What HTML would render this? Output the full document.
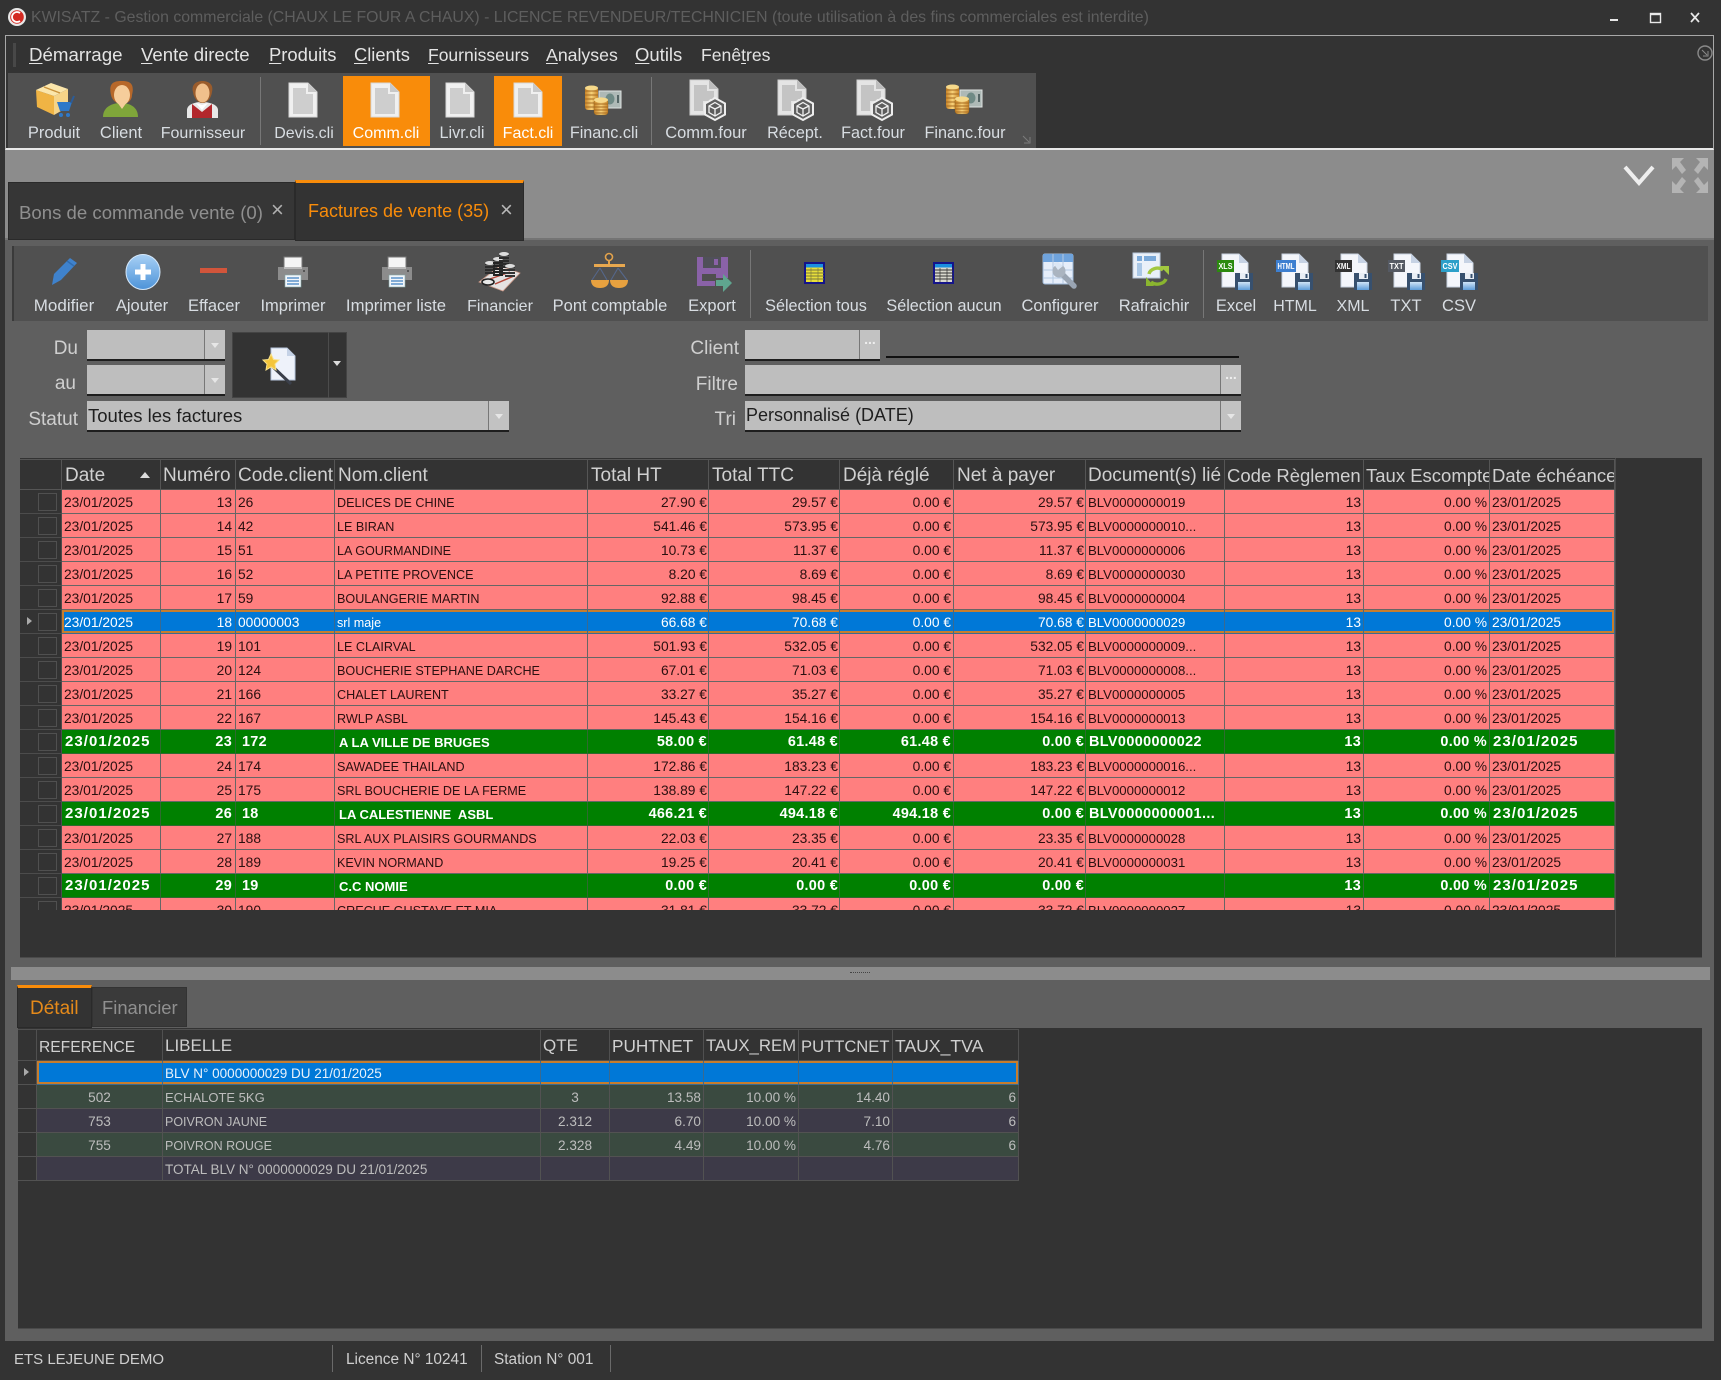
<!DOCTYPE html>
<html lang="fr"><head><meta charset="utf-8"><title>KWISATZ</title>
<style>
html,body{margin:0;padding:0;background:#333}
#app{position:relative;width:1721px;height:1380px;overflow:hidden;background:#333;font-family:"Liberation Sans",Arial,sans-serif;filter:blur(.3px)}
.b{position:absolute}
.t{position:absolute;white-space:nowrap;line-height:22px;height:22px}
.c{transform:translateX(-50%)}
.tb{font-size:16.5px;color:#d8dde2}
.m{font-size:18.5px;color:#e4e4e4;top:44px}
.m u{text-underline-offset:2px}
.lb{font-size:19px;color:#cfcfcf;text-align:right}
.inp{position:absolute;background:#bebebe;border-bottom:2px solid #1e1e1e;box-sizing:border-box}
.inp s{position:absolute;right:0;top:0;bottom:0;border-left:1px solid #777;background:#c2c2c2;text-decoration:none}
.inp s.ar:after{content:"";position:absolute;left:50%;top:45%;margin-left:-4px;border:4px solid transparent;border-top:5px solid #e6e6e6}
.inp s.dt:after{content:"...";position:absolute;left:0;right:0;top:1px;text-align:center;color:#eee;font-size:14px;font-weight:bold}
.inp span{position:absolute;left:1px;top:4px;font-size:18px;color:#1f1f1f;white-space:nowrap}
table{border-collapse:separate;border-spacing:0;table-layout:fixed;position:absolute;left:0;top:0}
td,th{box-sizing:border-box;overflow:hidden;white-space:nowrap;padding:0 2px;border-right:1px solid #666;border-bottom:1px solid #666}
#g1 th{height:31px;font-weight:normal;font-size:19px;color:#d0d0d0;text-align:left;padding:2px 3px 0;background:#333;border-color:#555;border-top:1px solid #555}
#g1 th:nth-child(n+11){font-size:18.5px}
#g1 td{height:24px;background:#ff7f7f;color:#2b1010;font-size:13.8px;line-height:21px;padding:2px 2px 0;vertical-align:top}
#g1 td:nth-child(1){background:#333;position:relative;border-color:#4c4c4c}
#g1 td:nth-child(3){text-align:right;padding-right:3px}
#g1 td:nth-child(6),#g1 td:nth-child(7),#g1 td:nth-child(9){text-align:right;padding-right:1px}
#g1 td:nth-child(8),#g1 td:nth-child(11),#g1 td:nth-child(12){text-align:right;padding-right:2px}
#g1 td:nth-child(5){font-size:12.6px;padding-top:3px;line-height:20px}
#g1 td:nth-child(10){font-size:13.2px}
#g1 td i{position:absolute;left:18px;top:3px;width:17px;height:16px;border:1px solid #505050}
#g1 tr.g td{background:#008000;color:#fff;font-weight:bold;font-size:14.4px;letter-spacing:.3px;border-color:#2f6a2f}
#g1 tr.g td:nth-child(1){background:#333;border-color:#4c4c4c}
#g1 tr.g td:nth-child(2),#g1 tr.g td:nth-child(13){letter-spacing:1.05px;font-size:15px;padding-top:1px;padding-left:3px;line-height:22px}
#g1 tr.g td:nth-child(4){padding-left:6px}
#g1 tr.g td:nth-child(5){font-size:13px;padding-left:4px;letter-spacing:0;padding-top:2px;line-height:21px}
#g1 tr.g td:nth-child(10){letter-spacing:.4px;padding-left:3px}
#g1 tr.s td{background:#0078d7;color:#fff;box-shadow:inset 0 2px 0 #c67d2e,inset 0 -2px 0 #c67d2e;border-color:#3a6a90}
#g1 tr.s td:nth-child(1){background:#333;box-shadow:none;border-color:#4c4c4c}
#g1 tr.s td:nth-child(2){box-shadow:inset 0 2px 0 #c67d2e,inset 0 -2px 0 #c67d2e,inset 2px 0 0 #c67d2e}
#g1 tr.s td:nth-child(13){box-shadow:inset 0 2px 0 #c67d2e,inset 0 -2px 0 #c67d2e,inset -2px 0 0 #c67d2e}
#g1 tr.s td:nth-child(1):before{content:"";position:absolute;left:7px;top:7px;border:4px solid transparent;border-left:5px solid #aaa}
#g2 th{height:32px;font-weight:normal;font-size:16.6px;color:#d0d0d0;text-align:left;padding:2px 2px 0;background:#333;border-color:#505050;border-top:1px solid #505050}
#g2 td{height:24px;font-size:13px;color:#bdbdbd;line-height:21px;padding:2px 2px 0;vertical-align:top;background:#3d3a48;border-color:#525252}
#g2 tr.a td{background:#3a4a40}
#g2 td:nth-child(1){background:#333 !important;position:relative}
#g2 td:nth-child(2){text-align:center;font-size:13.6px}
#g2 td:nth-child(4){text-align:center;font-size:13.6px}
#g2 td:nth-child(5),#g2 td:nth-child(6),#g2 td:nth-child(7),#g2 td:nth-child(8){text-align:right;font-size:13.6px}
#g2 tr.s td{background:#0078d7;color:#e8f2fb;box-shadow:inset 0 2px 0 #c67d2e,inset 0 -2px 0 #c67d2e;border-color:#3a6a90}
#g2 tr.s td:nth-child(1){box-shadow:none;border-color:#525252}
#g2 tr.s td:nth-child(2){box-shadow:inset 0 2px 0 #c67d2e,inset 0 -2px 0 #c67d2e,inset 2px 0 0 #c67d2e}
#g2 tr.s td:nth-child(8){box-shadow:inset 0 2px 0 #c67d2e,inset 0 -2px 0 #c67d2e,inset -2px 0 0 #c67d2e}
#g2 tr.s td:nth-child(1):before{content:"";position:absolute;left:6px;top:7px;border:4px solid transparent;border-left:5px solid #aaa}
.tab{position:absolute;box-sizing:border-box;background:#333;border:1px solid #2a2a2a}
svg{position:absolute;left:0;top:0}
</style></head>
<body><div id="app">

<!-- main panels -->
<div class="b" style="left:5px;top:35px;width:1709px;height:1306px;background:#5f5f5f"></div>
<div class="b" style="left:5px;top:150px;width:1709px;height:90px;background:#8c8c8c"></div>
<div class="b" style="left:5px;top:238px;width:1709px;height:2px;background:#747474"></div>
<div class="b" style="left:5px;top:35px;width:1709px;height:115px;box-sizing:border-box;background:#333;border:1px solid #a8a8a8;border-bottom:2px solid #e8e8e8"></div>
<div class="b" style="left:8px;top:73px;width:1028px;height:75px;background:#505050"></div>
<div class="b" style="left:343px;top:76px;width:87px;height:70px;background:#f98c0a"></div>
<div class="b" style="left:494px;top:76px;width:68px;height:70px;background:#f98c0a"></div>
<div class="b" style="left:260px;top:77px;width:1px;height:68px;background:#777"></div>
<div class="b" style="left:651px;top:77px;width:1px;height:68px;background:#777"></div>
<div class="b" style="left:13px;top:43px;width:3px;height:24px;background:#484848"></div>

<!-- title -->
<div class="t" style="left:31px;top:7px;font-size:15.85px;color:#5e5e5e">KWISATZ - Gestion commerciale (CHAUX LE FOUR A CHAUX) - LICENCE REVENDEUR/TECHNICIEN (toute utilisation à des fins commerciales est interdite)</div>

<!-- menu -->
<div class="t m" style="left:29px;font-size:18.7px"><u>D</u>émarrage</div>
<div class="t m" style="left:141px;font-size:18.6px"><u>V</u>ente directe</div>
<div class="t m" style="left:269px;font-size:18.4px"><u>P</u>roduits</div>
<div class="t m" style="left:354px;font-size:18.3px"><u>C</u>lients</div>
<div class="t m" style="left:428px;font-size:17.5px"><u>F</u>ournisseurs</div>
<div class="t m" style="left:546px;font-size:17.7px"><u>A</u>nalyses</div>
<div class="t m" style="left:635px;font-size:18.5px"><u>O</u>utils</div>
<div class="t m" style="left:701px;font-size:17.6px">Fenê<u>t</u>res</div>

<!-- toolbar labels -->
<div class="t c tb" style="left:54px;top:122px">Produit</div>
<div class="t c tb" style="left:121px;top:122px">Client</div>
<div class="t c tb" style="left:203px;top:123px;font-size:16px">Fournisseur</div>
<div class="t c tb" style="left:304px;top:123px;font-size:16px">Devis.cli</div>
<div class="t c tb" style="left:386px;top:123px;color:#fff;font-size:16px">Comm.cli</div>
<div class="t c tb" style="left:462px;top:122px;font-size:16.2px">Livr.cli</div>
<div class="t c tb" style="left:528px;top:123px;color:#fff;font-size:16px">Fact.cli</div>
<div class="t c tb" style="left:604px;top:122px;font-size:16.2px">Financ.cli</div>
<div class="t c tb" style="left:706px;top:122px">Comm.four</div>
<div class="t c tb" style="left:795px;top:122px;font-size:16.2px">Récept.</div>
<div class="t c tb" style="left:873px;top:122px;font-size:16.2px">Fact.four</div>
<div class="t c tb" style="left:965px;top:122px;font-size:16.2px">Financ.four</div>

<!-- tabs -->
<div class="tab" style="left:8px;top:182px;width:287px;height:58px;background:#363636"></div>
<div class="t" style="left:19px;top:202px;font-size:18.6px;color:#8f8f8f">Bons de commande vente (0)</div>
<div class="t" style="left:271px;top:199px;font-size:22px;color:#b0b0b0">×</div>
<div class="tab" style="left:295px;top:180px;width:229px;height:61px;border-top:3px solid #f98c0a"></div>
<div class="t" style="left:308px;top:200px;font-size:18px;color:#f98c0a">Factures de vente (35)</div>
<div class="t" style="left:500px;top:199px;font-size:22px;color:#b8b8b8">×</div>

<!-- ribbon -->
<div class="b" style="left:12px;top:246px;width:1696px;height:75px;background:#505050;border-left:2px solid #3a3a3a;box-sizing:border-box"></div>
<div class="b" style="left:750px;top:250px;width:1px;height:68px;background:#777"></div>
<div class="b" style="left:1203px;top:250px;width:1px;height:68px;background:#777"></div>
<div class="t c tb" style="left:64px;top:295px;font-size:17px">Modifier</div>
<div class="t c tb" style="left:142px;top:295px">Ajouter</div>
<div class="t c tb" style="left:214px;top:295px">Effacer</div>
<div class="t c tb" style="left:293px;top:295px">Imprimer</div>
<div class="t c tb" style="left:396px;top:295px;font-size:16.7px">Imprimer liste</div>
<div class="t c tb" style="left:500px;top:296px;font-size:16px">Financier</div>
<div class="t c tb" style="left:610px;top:295px">Pont comptable</div>
<div class="t c tb" style="left:712px;top:295px">Export</div>
<div class="t c tb" style="left:816px;top:295px;font-size:16.2px">Sélection tous</div>
<div class="t c tb" style="left:944px;top:295px;font-size:16.2px">Sélection aucun</div>
<div class="t c tb" style="left:1060px;top:295px">Configurer</div>
<div class="t c tb" style="left:1154px;top:295px">Rafraichir</div>
<div class="t c tb" style="left:1236px;top:295px">Excel</div>
<div class="t c tb" style="left:1295px;top:296px;font-size:16px">HTML</div>
<div class="t c tb" style="left:1353px;top:296px;font-size:16px">XML</div>
<div class="t c tb" style="left:1406px;top:295px">TXT</div>
<div class="t c tb" style="left:1459px;top:295px">CSV</div>

<!-- form -->
<div class="t lb" style="left:0;width:78px;top:338px">Du</div>
<div class="t lb" style="left:0;width:76px;top:373px">au</div>
<div class="t lb" style="left:0;width:78px;top:409px">Statut</div>
<div class="t lb" style="left:640px;width:99px;top:338px">Client</div>
<div class="t lb" style="left:640px;width:98px;top:374px">Filtre</div>
<div class="t lb" style="left:640px;width:96px;top:409px">Tri</div>
<div class="inp" style="left:87px;top:330px;width:138px;height:31px"><s class="ar" style="width:20px"></s></div>
<div class="inp" style="left:87px;top:365px;width:138px;height:31px"><s class="ar" style="width:20px"></s></div>
<div class="inp" style="left:87px;top:401px;width:422px;height:31px"><span style="font-size:18.5px;left:1px">Toutes les factures</span><s class="ar" style="width:20px"></s></div>
<div class="b" style="left:232px;top:332px;width:115px;height:66px;background:#333;border:1px solid #444;box-sizing:border-box"></div>
<div class="b" style="left:328px;top:332px;width:1px;height:66px;background:#4c4c4c"></div>
<div class="b" style="left:333px;top:361px;border:4px solid transparent;border-top:5px solid #ddd"></div>
<div class="inp" style="left:745px;top:330px;width:135px;height:31px"><s class="dt" style="width:20px"></s></div>
<div class="b" style="left:886px;top:356px;width:353px;height:2px;background:#111"></div>
<div class="inp" style="left:745px;top:365px;width:496px;height:31px"><s class="dt" style="width:20px"></s></div>
<div class="inp" style="left:745px;top:401px;width:496px;height:31px"><span>Personnalisé (DATE)</span><s class="ar" style="width:20px"></s></div>

<!-- grid 1 -->
<div class="b" style="left:20px;top:458px;width:1682px;height:499px;background:#333;border-bottom:1px solid #4a4a4a"></div>
<div class="b" style="left:1615px;top:458px;width:1px;height:499px;background:#4c4c4c"></div>
<div class="b" style="left:20px;top:459px;width:1595px;height:451px;overflow:hidden">
<table id="g1" style="width:1595px">
<colgroup><col style="width:42px"><col style="width:99px"><col style="width:75px"><col style="width:99px"><col style="width:253px"><col style="width:121px"><col style="width:131px"><col style="width:114px"><col style="width:132px"><col style="width:139px"><col style="width:139px"><col style="width:126px"><col style="width:125px"></colgroup>
<tr><th></th><th style="position:relative">Date<span style="position:absolute;right:10px;top:12px;border:5px solid transparent;border-top:0;border-bottom:6px solid #ddd"></span></th><th style="padding:2px 2px 0">Numéro</th><th style="padding:2px 2px 0">Code.client</th><th>Nom.client</th><th>Total HT</th><th>Total TTC</th><th>Déjà réglé</th><th>Net à payer</th><th style="padding:2px 2px 0">Document(s) lié</th><th style="padding:2px 2px 0">Code Règlemen</th><th style="padding:2px 2px 0">Taux Escompte</th><th style="padding:2px 2px 0">Date échéance</th></tr>
<tr><td><i></i></td><td>23/01/2025</td><td>13</td><td>26</td><td>DELICES DE CHINE</td><td>27.90 €</td><td>29.57 €</td><td>0.00 €</td><td>29.57 €</td><td>BLV0000000019</td><td>13</td><td>0.00 %</td><td>23/01/2025</td></tr>
<tr><td><i></i></td><td>23/01/2025</td><td>14</td><td>42</td><td>LE BIRAN</td><td>541.46 €</td><td>573.95 €</td><td>0.00 €</td><td>573.95 €</td><td>BLV0000000010...</td><td>13</td><td>0.00 %</td><td>23/01/2025</td></tr>
<tr><td><i></i></td><td>23/01/2025</td><td>15</td><td>51</td><td>LA GOURMANDINE</td><td>10.73 €</td><td>11.37 €</td><td>0.00 €</td><td>11.37 €</td><td>BLV0000000006</td><td>13</td><td>0.00 %</td><td>23/01/2025</td></tr>
<tr><td><i></i></td><td>23/01/2025</td><td>16</td><td>52</td><td>LA PETITE PROVENCE</td><td>8.20 €</td><td>8.69 €</td><td>0.00 €</td><td>8.69 €</td><td>BLV0000000030</td><td>13</td><td>0.00 %</td><td>23/01/2025</td></tr>
<tr><td><i></i></td><td>23/01/2025</td><td>17</td><td>59</td><td>BOULANGERIE MARTIN</td><td>92.88 €</td><td>98.45 €</td><td>0.00 €</td><td>98.45 €</td><td>BLV0000000004</td><td>13</td><td>0.00 %</td><td>23/01/2025</td></tr>
<tr class="s"><td><i></i></td><td>23/01/2025</td><td>18</td><td>00000003</td><td>srl maje</td><td>66.68 €</td><td>70.68 €</td><td>0.00 €</td><td>70.68 €</td><td>BLV0000000029</td><td>13</td><td>0.00 %</td><td>23/01/2025</td></tr>
<tr><td><i></i></td><td>23/01/2025</td><td>19</td><td>101</td><td>LE CLAIRVAL</td><td>501.93 €</td><td>532.05 €</td><td>0.00 €</td><td>532.05 €</td><td>BLV0000000009...</td><td>13</td><td>0.00 %</td><td>23/01/2025</td></tr>
<tr><td><i></i></td><td>23/01/2025</td><td>20</td><td>124</td><td>BOUCHERIE STEPHANE DARCHE</td><td>67.01 €</td><td>71.03 €</td><td>0.00 €</td><td>71.03 €</td><td>BLV0000000008...</td><td>13</td><td>0.00 %</td><td>23/01/2025</td></tr>
<tr><td><i></i></td><td>23/01/2025</td><td>21</td><td>166</td><td>CHALET LAURENT</td><td>33.27 €</td><td>35.27 €</td><td>0.00 €</td><td>35.27 €</td><td>BLV0000000005</td><td>13</td><td>0.00 %</td><td>23/01/2025</td></tr>
<tr><td><i></i></td><td>23/01/2025</td><td>22</td><td>167</td><td>RWLP ASBL</td><td>145.43 €</td><td>154.16 €</td><td>0.00 €</td><td>154.16 €</td><td>BLV0000000013</td><td>13</td><td>0.00 %</td><td>23/01/2025</td></tr>
<tr class="g"><td><i></i></td><td>23/01/2025</td><td>23</td><td>172</td><td>A LA VILLE DE BRUGES</td><td>58.00 €</td><td>61.48 €</td><td>61.48 €</td><td>0.00 €</td><td>BLV0000000022</td><td>13</td><td>0.00 %</td><td>23/01/2025</td></tr>
<tr><td><i></i></td><td>23/01/2025</td><td>24</td><td>174</td><td>SAWADEE THAILAND</td><td>172.86 €</td><td>183.23 €</td><td>0.00 €</td><td>183.23 €</td><td>BLV0000000016...</td><td>13</td><td>0.00 %</td><td>23/01/2025</td></tr>
<tr><td><i></i></td><td>23/01/2025</td><td>25</td><td>175</td><td>SRL BOUCHERIE DE LA FERME</td><td>138.89 €</td><td>147.22 €</td><td>0.00 €</td><td>147.22 €</td><td>BLV0000000012</td><td>13</td><td>0.00 %</td><td>23/01/2025</td></tr>
<tr class="g"><td><i></i></td><td>23/01/2025</td><td>26</td><td>18</td><td>LA CALESTIENNE&nbsp; ASBL</td><td>466.21 €</td><td>494.18 €</td><td>494.18 €</td><td>0.00 €</td><td>BLV0000000001...</td><td>13</td><td>0.00 %</td><td>23/01/2025</td></tr>
<tr><td><i></i></td><td>23/01/2025</td><td>27</td><td>188</td><td>SRL AUX PLAISIRS GOURMANDS</td><td>22.03 €</td><td>23.35 €</td><td>0.00 €</td><td>23.35 €</td><td>BLV0000000028</td><td>13</td><td>0.00 %</td><td>23/01/2025</td></tr>
<tr><td><i></i></td><td>23/01/2025</td><td>28</td><td>189</td><td>KEVIN NORMAND</td><td>19.25 €</td><td>20.41 €</td><td>0.00 €</td><td>20.41 €</td><td>BLV0000000031</td><td>13</td><td>0.00 %</td><td>23/01/2025</td></tr>
<tr class="g"><td><i></i></td><td>23/01/2025</td><td>29</td><td>19</td><td>C.C NOMIE</td><td>0.00 €</td><td>0.00 €</td><td>0.00 €</td><td>0.00 €</td><td></td><td>13</td><td>0.00 %</td><td>23/01/2025</td></tr>
<tr><td><i></i></td><td>23/01/2025</td><td>30</td><td>190</td><td>CRECHE GUSTAVE ET MIA</td><td>31.81 €</td><td>33.72 €</td><td>0.00 €</td><td>33.72 €</td><td>BLV0000000027</td><td>13</td><td>0.00 %</td><td>23/01/2025</td></tr>
</table></div>

<!-- splitter -->
<div class="b" style="left:11px;top:967px;width:1699px;height:13px;background:#8c8c8c"></div>
<div class="b" style="left:850px;top:972px;width:20px;height:0;border-top:1px dotted #444"></div>

<!-- lower -->
<div class="tab" style="left:17px;top:985px;width:75px;height:43px;border-top:3px solid #f98c0a"></div>
<div class="t" style="left:30px;top:998px;font-size:19px;color:#e58a1a">Détail</div>
<div class="tab" style="left:92px;top:987px;width:95px;height:40px;background:#3a3a3a;border-color:#333"></div>
<div class="t" style="left:102px;top:997px;font-size:18.4px;color:#8f8f8f">Financier</div>
<div class="b" style="left:18px;top:1028px;width:1684px;height:300px;background:#333;border-bottom:1px solid #4a4a4a"></div>
<div class="b" style="left:18px;top:1029px;width:1001px;height:152px;overflow:hidden">
<table id="g2" style="width:1001px">
<colgroup><col style="width:19px"><col style="width:126px"><col style="width:378px"><col style="width:69px"><col style="width:94px"><col style="width:95px"><col style="width:94px"><col style="width:126px"></colgroup>
<tr><th></th><th style="font-size:15.6px;padding-top:5px">REFERENCE</th><th style="font-size:17px">LIBELLE</th><th style="font-size:17px">QTE</th><th style="font-size:17.2px">PUHTNET</th><th style="font-size:16.8px">TAUX_REM</th><th style="padding-top:4px">PUTTCNET</th><th style="font-size:17.6px">TAUX_TVA</th></tr>
<tr class="s"><td></td><td></td><td style="font-size:13.5px">BLV N° 0000000029 DU 21/01/2025</td><td></td><td></td><td></td><td></td><td></td></tr>
<tr class="a"><td></td><td>502</td><td>ECHALOTE 5KG</td><td>3</td><td>13.58</td><td>10.00 %</td><td>14.40</td><td>6</td></tr>
<tr><td></td><td>753</td><td style="font-size:12.5px;padding-top:3px;line-height:20px">POIVRON JAUNE</td><td>2.312</td><td>6.70</td><td>10.00 %</td><td>7.10</td><td>6</td></tr>
<tr class="a"><td></td><td>755</td><td style="font-size:12.5px;padding-top:3px;line-height:20px">POIVRON ROUGE</td><td>2.328</td><td>4.49</td><td>10.00 %</td><td>4.76</td><td>6</td></tr>
<tr><td></td><td></td><td style="font-size:13.5px">TOTAL BLV N° 0000000029 DU 21/01/2025</td><td></td><td></td><td></td><td></td><td></td></tr>
</table></div>

<!-- status -->
<div class="b" style="left:0;top:1341px;width:1721px;height:39px;background:#333"></div>
<div class="t" style="left:14px;top:1349px;font-size:15px;color:#cfcfcf">ETS LEJEUNE DEMO</div>
<div class="t" style="left:346px;top:1349px;font-size:15.4px;color:#cfcfcf">Licence N° 10241</div>
<div class="t" style="left:494px;top:1349px;font-size:15.4px;color:#cfcfcf">Station N° 001</div>
<div class="b" style="left:332px;top:1345px;width:1px;height:27px;background:#6a6a6a"></div>
<div class="b" style="left:481px;top:1345px;width:1px;height:27px;background:#6a6a6a"></div>
<div class="b" style="left:610px;top:1345px;width:1px;height:27px;background:#6a6a6a"></div>

<!-- icons -->
<svg width="1721" height="1380" viewBox="0 0 1721 1380" style="pointer-events:none">
<defs>
<linearGradient id="gold" x1="0" x2="1" y1="0" y2="0"><stop offset="0" stop-color="#c98428"/><stop offset=".5" stop-color="#f7d27a"/><stop offset="1" stop-color="#c98428"/></linearGradient>
<linearGradient id="blueb" x1="0" x2="0" y1="0" y2="1"><stop offset="0" stop-color="#a8d0f5"/><stop offset="1" stop-color="#4d93d8"/></linearGradient>
<linearGradient id="fl" x1="0" x2="0" y1="0" y2="1"><stop offset="0" stop-color="#cfe4f7"/><stop offset="1" stop-color="#5d9bd8"/></linearGradient>
<symbol id="doc" width="30" height="36" viewBox="0 0 30 36" overflow="visible">
 <path d="M1 1H20L29 10V35H1Z" fill="#f0f0f0" stroke="#d8d8d8"/>
 <path d="M20 1V10H29Z" fill="#c8c8c8"/>
 <path d="M5 7H18M5 9H18M5 11H18M5 13H25M5 15H25M5 17H25M5 19H25M5 21H25M5 23H25M5 25H25M5 27H25M5 29H25M5 31H25" stroke="#acacac" stroke-width="1.1" fill="none"/>
</symbol>
<symbol id="docb" width="38" height="42" viewBox="0 0 38 42" overflow="visible">
 <path d="M1 1H20L29 10V36H1Z" fill="#e4e4e4" stroke="#cfcfcf"/>
 <path d="M20 1V10H29Z" fill="#bdbdbd"/>
 <path d="M5 7H18M5 9H18M5 11H18M5 13H25M5 15H25M5 17H25M5 19H25M5 21H25M5 23H14M5 25H14M5 27H14M5 29H14M5 31H14" stroke="#a4a4a4" stroke-width="1.1" fill="none"/>
 <path d="M26 19L36 24.5V35.5L26 41L16 35.5V24.5Z" fill="#606060" stroke="#eeeeee" stroke-width="2"/>
 <path d="M26 23.5L32 27V33.5L26 37L20 33.5V27Z" fill="#5c5c5c" stroke="#f2f2f2" stroke-width="1.3"/>
 <path d="M20 27L26 30L32 27M26 30V37" fill="none" stroke="#f2f2f2" stroke-width="1.3"/>
</symbol>
<symbol id="coins" width="38" height="32" viewBox="0 0 38 32" overflow="visible">
 <rect x="14" y="6" width="22" height="17" fill="#aeb9b6" stroke="#dfe4e2"/>
 <ellipse cx="25" cy="14" rx="4.5" ry="5.5" fill="#6f8a85"/>
 <rect x="32" y="10" width="2" height="8" fill="#566"/>
 <rect x="0" y="2" width="13" height="23" rx="3" fill="url(#gold)"/>
 <path d="M0 6H13M0 10H13M0 14H13M0 18H13M0 22H13" stroke="#a66a20" stroke-width="1"/>
 <ellipse cx="6.5" cy="3" rx="6.5" ry="2.5" fill="#f6d98a"/>
 <rect x="9" y="14" width="14" height="16" rx="3" fill="url(#gold)" stroke="#7e5518" stroke-width=".4"/>
 <path d="M9 19H23M9 22H23M9 25H23M9 28H23" stroke="#a66a20" stroke-width="1"/>
 <ellipse cx="16" cy="15" rx="7" ry="2.6" fill="#f6d98a"/>
</symbol>
<symbol id="printer" width="32" height="30" viewBox="0 0 32 30" overflow="visible">
 <rect x="7" y="0" width="18" height="12" fill="#f5f5f5" stroke="#777" stroke-width="1"/>
 <path d="M1 10H31V23H1Z" fill="#8c8c8c"/>
 <rect x="7" y="10" width="18" height="2" fill="#bbb"/>
 <circle cx="27" cy="14" r="1" fill="#444"/>
 <rect x="8" y="18" width="16" height="12" fill="#f2f6fb" stroke="#8aa" stroke-width=".6"/>
 <path d="M10 21H22M10 24H22M10 27H22" stroke="#5d93c9" stroke-width="1.6"/>
</symbol>
<symbol id="file" width="38" height="38" viewBox="0 0 38 38" overflow="visible">
 <path d="M6 1H23L32 10V34H6Z" fill="#f4f6fb" stroke="#c8d2e0"/>
 <path d="M23 1V10H32Z" fill="#c6d2e4"/>
 <rect x="19" y="20" width="18" height="17" fill="#37506e"/>
 <rect x="24" y="20" width="9" height="6" fill="#e9eef5"/>
 <rect x="29.5" y="21" width="2" height="4" fill="#37506e"/>
 <rect x="22" y="29" width="12" height="8" fill="url(#fl)"/>
</symbol>
<symbol id="sel" width="22" height="22" viewBox="0 0 22 22" overflow="visible">
 <rect x="1" y="1" width="19" height="20" fill="currentColor" stroke="#14148a" stroke-width="2"/>
 <rect x="2" y="2" width="17" height="3.5" fill="#1a8fe0"/>
</symbol>
</defs>

<!-- title logo -->
<circle cx="17" cy="17" r="9" fill="#e8e8e8"/><circle cx="17" cy="17" r="6.8" fill="#d42a22"/><path d="M20 13A5 5 0 1 0 20 21" fill="none" stroke="#fff" stroke-width="1.8"/>
<!-- window controls -->
<rect x="1610" y="19" width="8" height="2" fill="#e8e8e8"/>
<rect x="1650.5" y="13.5" width="10" height="9" fill="none" stroke="#e8e8e8" stroke-width="1.4"/><rect x="1650" y="13" width="11" height="2.2" fill="#e8e8e8"/>
<path d="M1691 13L1699 22M1699 13L1691 22" stroke="#e8e8e8" stroke-width="1.7"/>
<!-- menu corner -->
<circle cx="1705" cy="53" r="7" fill="none" stroke="#8a8a8a" stroke-width="1.4"/><path d="M1702 50L1707 55M1703 56H1708V51" fill="none" stroke="#8a8a8a" stroke-width="1"/>
<path d="M1023 136L1029 142M1024 143H1030V137" fill="none" stroke="#7c7c7c" stroke-width="1"/>
<!-- chevron + expand -->
<path d="M1625 167L1639 183L1653 167" fill="none" stroke="#eeeeee" stroke-width="4"/>
<g fill="#b4b4b4">
<path d="M1672 158H1684L1680 162L1686 170L1682 174L1676 166L1672 170Z"/>
<path d="M1708 158H1696L1700 162L1694 170L1698 174L1704 166L1708 170Z"/>
<path d="M1672 193H1684L1680 189L1686 181L1682 177L1676 185L1672 181Z"/>
<path d="M1708 193H1696L1700 189L1694 181L1698 177L1704 185L1708 181Z"/>
</g>

<!-- Produit -->
<g>
 <path d="M36 90L54 96V115L37 107Z" fill="#f0b444"/>
 <path d="M54 96L68 89V107L54 115Z" fill="#f6d488"/>
 <path d="M36 90L51 83L68 89L54 96Z" fill="#fbe6ab"/>
 <path d="M44 87L60 93" stroke="#c9913a" stroke-width="1.4"/>
 <path d="M57 102H72L69 111H60Z" fill="#2e78c8"/>
 <path d="M71 103L74 96" stroke="#2b5c98" stroke-width="2"/>
 <circle cx="61" cy="115" r="2" fill="#2e78c8"/><circle cx="68" cy="115" r="2" fill="#2e78c8"/>
</g>
<!-- Client -->
<g>
 <path d="M103 117C103 107 112 103 121 103C130 103 138 107 138 117Z" fill="#7fa53a"/>
 <path d="M111 95C108 82 115 81 122 81C129 81 135 83 132 95C132 100 128 104 122 104C116 104 112 100 111 95Z" fill="#b7682a"/>
 <ellipse cx="122" cy="95" rx="8" ry="10" fill="#f6cd9b"/>
 <path d="M117 102L122 109L127 102Z" fill="#f6cd9b"/>
</g>
<!-- Fournisseur -->
<g>
 <path d="M187 118V110C187 105 194 102 202 102C210 102 218 105 218 110V118Z" fill="#e8e8e8"/>
 <path d="M192 118V104L202 112L212 104V118Z" fill="#b2272c"/>
 <path d="M196 103L202 110L208 103L202 105Z" fill="#fff"/>
 <path d="M193 92C191 84 197 81 202.5 81C208 81 214 84 212 92C211 99 207 103 202.5 103C198 103 194 99 193 92Z" fill="#9a5c2c"/>
 <ellipse cx="202.5" cy="93" rx="7" ry="9.5" fill="#f0c08c"/>
</g>
<use href="#doc" x="288" y="82"/>
<use href="#doc" x="370" y="82"/>
<use href="#doc" x="445" y="82"/>
<use href="#doc" x="513" y="82"/>
<use href="#coins" x="585" y="85"/>
<use href="#docb" x="689" y="79"/>
<use href="#docb" x="777" y="79"/>
<use href="#docb" x="856" y="79"/>
<use href="#coins" x="946" y="84"/>

<!-- Modifier -->
<path d="M52 285L54 274L70 258L77 263L61 280Z" fill="#3f82cc"/><path d="M67 261L74 266" stroke="#2f6cb0" stroke-width="1.4"/>
<!-- Ajouter -->
<ellipse cx="143" cy="272" rx="17" ry="17.5" fill="url(#blueb)" stroke="#d5e8fa"/>
<path d="M143 264V280M135 272H151" stroke="#fff" stroke-width="5"/>
<!-- Effacer -->
<rect x="200" y="268" width="27" height="5" fill="#d2553b"/>
<use href="#printer" x="277" y="257"/>
<use href="#printer" x="381" y="257"/>
<!-- Financier -->
<g>
 <path d="M479 282L503 291L520 273L500 266Z" fill="#e4e2e2" stroke="#c98" stroke-width=".8"/>
 <path d="M490 279L510 272M495 284L514 276" stroke="#b5473a" stroke-width="1.4"/>
 <ellipse cx="488" cy="282" rx="6" ry="3" fill="#e8e8e8" stroke="#222" stroke-width="1.6"/>
 <path d="M490 263V274" stroke="#2c2c2c" stroke-width="10" stroke-dasharray="2 1"/><ellipse cx="490" cy="263" rx="5" ry="2" fill="#ddd"/>
 <path d="M498 259V277" stroke="#222" stroke-width="10" stroke-dasharray="2 1"/><ellipse cx="498" cy="259" rx="5" ry="2" fill="#ddd"/>
 <path d="M504 254V274" stroke="#2a2a2a" stroke-width="10" stroke-dasharray="2 1"/><ellipse cx="504" cy="254" rx="5" ry="2" fill="#ddd"/>
 <path d="M510 266V277" stroke="#333" stroke-width="10" stroke-dasharray="2 1"/><ellipse cx="510" cy="266" rx="5" ry="2" fill="#ddd"/>
</g>
<!-- Balance -->
<g>
 <circle cx="609" cy="257" r="3.5" fill="#4a4a4a" stroke="#e2a24c" stroke-width="1.6"/>
 <path d="M609 260V265" stroke="#e2a24c" stroke-width="2"/>
 <rect x="594" y="264" width="31" height="3" fill="#e8a84f"/>
 <path d="M600 268L592 280M600 268L607 280M618 268L611 280M618 268L627 280" stroke="#55678a" stroke-width="1.1"/>
 <path d="M591 280H609C609 286 605 288 600 288C595 288 591 286 591 280Z" fill="#e7a13f"/>
 <path d="M610 280H628C628 286 624 288 619 288C614 288 610 286 610 280Z" fill="#e7a13f"/>
</g>
<!-- Export -->
<path d="M697 257H728V278H715V286H697Z" fill="#8a62a8"/>
<rect x="703" y="257" width="18" height="11" fill="#50505a"/><rect x="714" y="259" width="4" height="6" fill="#8a62a8"/>
<rect x="702" y="274" width="14" height="7" fill="#4f4f4f"/>
<path d="M716 280H723V274L732 283L723 292V286H716Z" fill="#5fa58f"/>
<!-- selections -->
<g style="color:#e8df3a"><use href="#sel" x="804" y="262"/><path d="M806 270H824M806 273H824M806 276H824M806 279H824" stroke="#77763a" stroke-width=".9"/><path d="M811 268V282M818 268V282" stroke="#77763a" stroke-width=".6"/></g>
<g style="color:#d9d9cf"><use href="#sel" x="933" y="262"/><path d="M935 270H953M935 273H953M935 276H953M935 279H953" stroke="#333" stroke-width="1"/><path d="M940 268V282M947 268V282" stroke="#333" stroke-width=".7"/></g>
<!-- Configurer -->
<rect x="1043" y="254" width="30" height="30" rx="2" fill="#e6eefa" stroke="#9bb7d8"/>
<rect x="1043" y="254" width="30" height="8" fill="#6fa3dc"/>
<path d="M1043 270H1073M1043 278H1073M1053 254V284M1063 254V284" stroke="#b3c8e2" stroke-width="1"/>
<path d="M1062 274L1074 286" stroke="#9aa5b3" stroke-width="5.5" stroke-linecap="round"/>
<circle cx="1059" cy="271" r="6.5" fill="#aab4c0"/>
<path d="M1053 263L1058 270L1063 266L1058 262Z" fill="#dbe6f4"/>
<!-- Rafraichir -->
<rect x="1133" y="253" width="27" height="25" fill="#e9f0f9" stroke="#b8c9dd"/>
<rect x="1137" y="256" width="5" height="5" fill="#7aa9d9"/><rect x="1144" y="256" width="12" height="5" fill="#7aa9d9"/>
<rect x="1137" y="263" width="5" height="13" fill="#a9c7e6"/>
<path d="M1149 274C1150 269 1158 266 1163 270" fill="none" stroke="#a2c83f" stroke-width="3.4"/>
<path d="M1160 266H1169V275Z" fill="#a2c83f"/>
<path d="M1166 279C1164 284 1156 286 1151 282" fill="none" stroke="#8ab52f" stroke-width="3.4"/>
<path d="M1154 286H1146V277Z" fill="#8ab52f"/>
<!-- files -->
<use href="#file" x="1216" y="253"/><use href="#file" x="1276" y="253"/><use href="#file" x="1335" y="253"/><use href="#file" x="1388" y="253"/><use href="#file" x="1441" y="253"/>
<g font-family="Liberation Sans,Arial,sans-serif" font-size="8.5" font-weight="bold" fill="#fff">
<rect x="1217" y="260" width="17" height="12" fill="#2b8a0e"/><text x="1218.5" y="269" textLength="14" lengthAdjust="spacingAndGlyphs">XLS</text>
<rect x="1276" y="260" width="20" height="12" fill="#3d7fd0"/><text x="1277.5" y="269" textLength="17" lengthAdjust="spacingAndGlyphs">HTML</text>
<rect x="1335" y="260" width="17" height="12" fill="#333"/><text x="1336.5" y="269" textLength="14" lengthAdjust="spacingAndGlyphs">XML</text>
<rect x="1388" y="260" width="17" height="12" fill="#555a64"/><text x="1389.5" y="269" textLength="14" lengthAdjust="spacingAndGlyphs">TXT</text>
<rect x="1441" y="260" width="18" height="12" fill="#2c9fc9"/><text x="1442.5" y="269" textLength="15" lengthAdjust="spacingAndGlyphs">CSV</text>
</g>
<!-- wizard -->
<path d="M271 348H287L295 356V380H271Z" fill="#eef2fa" stroke="#b7c5dc"/>
<path d="M287 348V356H295Z" fill="#c5d2e6"/>
<path d="M272 366L291 384" stroke="#3a3f4a" stroke-width="3"/>
<path d="M271 354L273.5 359.5L279 360L275 364L276 370L271 367L266 370L267 364L263 360L268.5 359.5Z" fill="#f4c53a" stroke="#f9e28a"/>
</svg>

</div></body></html>
